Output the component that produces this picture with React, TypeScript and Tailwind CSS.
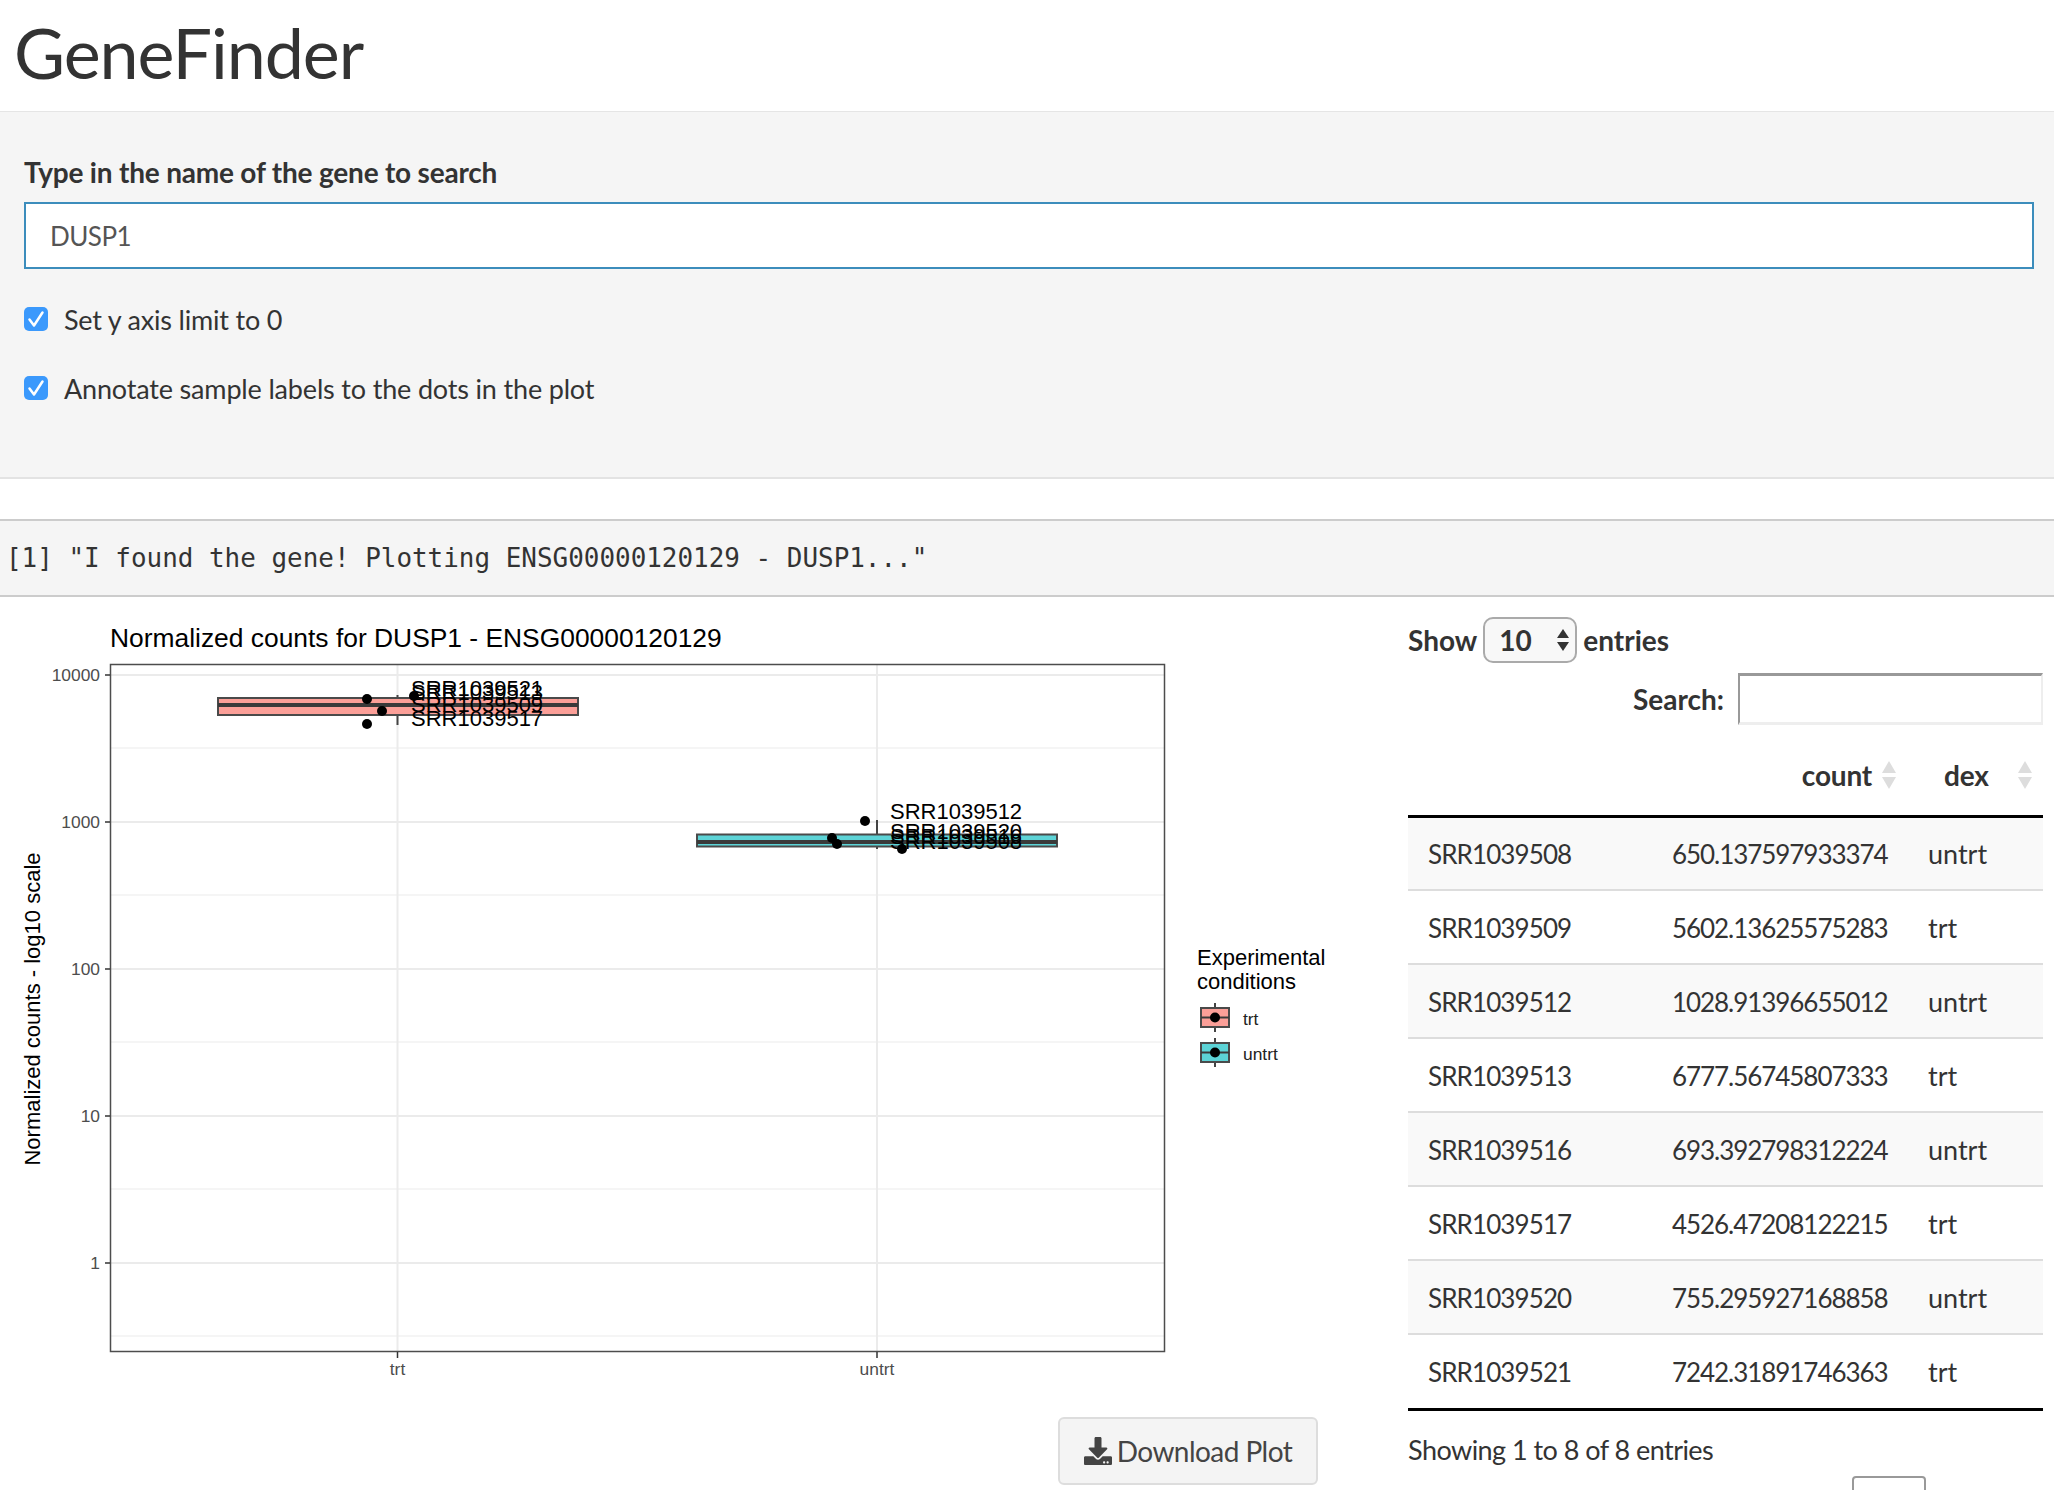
import { FaDownload } from "react-icons/fa";

const sans = "font-['Lato','Noto_Sans',sans-serif]";

const rows = [
  ["SRR1039508", "650.137597933374", "untrt"],
  ["SRR1039509", "5602.13625575283", "trt"],
  ["SRR1039512", "1028.91396655012", "untrt"],
  ["SRR1039513", "6777.56745807333", "trt"],
  ["SRR1039516", "693.392798312224", "untrt"],
  ["SRR1039517", "4526.47208122215", "trt"],
  ["SRR1039520", "755.295927168858", "untrt"],
  ["SRR1039521", "7242.31891746363", "trt"],
];

const majors = [
  { y: 675, label: "10000" },
  { y: 822, label: "1000" },
  { y: 969, label: "100" },
  { y: 1116, label: "10" },
  { y: 1263, label: "1" },
];
const minors = [748, 895, 1042, 1189, 1336];

const points = [
  { x: 414, y: 696, labelX: 411, labelY: 696, name: "SRR1039521" },
  { x: 367, y: 699, labelX: 411, labelY: 700, name: "SRR1039513" },
  { x: 382, y: 711, labelX: 411, labelY: 712, name: "SRR1039509" },
  { x: 367, y: 724, labelX: 411, labelY: 726, name: "SRR1039517" },
  { x: 865, y: 821, labelX: 890, labelY: 819, name: "SRR1039512" },
  { x: 832, y: 838, labelX: 890, labelY: 839, name: "SRR1039520" },
  { x: 837, y: 844, labelX: 890, labelY: 844, name: "SRR1039516" },
  { x: 902, y: 849, labelX: 890, labelY: 849, name: "SRR1039508" },
];

function CheckBox() {
  return (
    <span className="mb-[2px] flex h-6 w-6 items-center justify-center rounded-[5px] bg-[#3b99fc]">
      <svg width="24" height="24" viewBox="0 0 24 24" fill="none">
        <path
          d="M5.5 12.5 L10 18.5 L18.5 5.5"
          stroke="white"
          strokeWidth="2.5"
          strokeLinecap="round"
          strokeLinejoin="round"
        />
      </svg>
    </span>
  );
}

function SortArrows() {
  return (
    <svg width="16" height="30" viewBox="0 0 16 30" fill="#ddd">
      <path d="M8 1 L15 13 L1 13 Z" />
      <path d="M1 17 L15 17 L8 29 Z" />
    </svg>
  );
}

function Plot() {
  return (
    <svg
      width="1380"
      height="790"
      viewBox="0 597 1380 790"
      fontFamily="'Liberation Sans', Arial, sans-serif"
      className="block"
    >
      <text x="110" y="647" fontSize="26.4" fill="#000">
        Normalized counts for DUSP1 - ENSG00000120129
      </text>

      {minors.map((y) => (
        <line key={y} x1="110" x2="1165" y1={y} y2={y} stroke="#f2f2f2" strokeWidth="1.5" />
      ))}
      {majors.map((m) => (
        <line key={m.y} x1="110" x2="1165" y1={m.y} y2={m.y} stroke="#ebebeb" strokeWidth="2" />
      ))}
      <line x1="397.5" x2="397.5" y1="664" y2="1352" stroke="#ebebeb" strokeWidth="2" />
      <line x1="877" x2="877" y1="664" y2="1352" stroke="#ebebeb" strokeWidth="2" />

      <line x1="397.5" x2="397.5" y1="695" y2="725" stroke="#444" strokeWidth="2" />
      <rect x="218" y="698" width="360" height="17" fill="#fb9f98" stroke="#4a4a4a" strokeWidth="2" />
      <line x1="218" x2="578" y1="705" y2="705" stroke="#3a3a3a" strokeWidth="4" />

      <line x1="877" x2="877" y1="820" y2="849" stroke="#444" strokeWidth="2" />
      <rect x="697" y="834.5" width="360" height="12" fill="#5cd3d6" stroke="#4a4a4a" strokeWidth="2" />
      <line x1="697" x2="1057" y1="842" y2="842" stroke="#3a3a3a" strokeWidth="4" />

      {points.map((p) => (
        <circle key={p.name} cx={p.x} cy={p.y} r="5" fill="#000" />
      ))}
      {points.map((p) => (
        <text key={p.name} x={p.labelX} y={p.labelY} fontSize="22" fill="#000">
          {p.name}
        </text>
      ))}

      <rect x="110.5" y="664.5" width="1054" height="687" fill="none" stroke="#4d4d4d" strokeWidth="1.5" />

      {majors.map((m) => (
        <g key={m.label}>
          <line x1="105" x2="110" y1={m.y} y2={m.y} stroke="#333" strokeWidth="1.5" />
          <text x="100" y={m.y + 6} textAnchor="end" fontSize="17.4" fill="#4d4d4d">
            {m.label}
          </text>
        </g>
      ))}
      <line x1="397.5" x2="397.5" y1="1352" y2="1358" stroke="#333" strokeWidth="1.5" />
      <line x1="877" x2="877" y1="1352" y2="1358" stroke="#333" strokeWidth="1.5" />
      <text x="397.5" y="1375" textAnchor="middle" fontSize="17.4" fill="#4d4d4d">
        trt
      </text>
      <text x="877" y="1375" textAnchor="middle" fontSize="17.4" fill="#4d4d4d">
        untrt
      </text>

      <text
        x="40"
        y="1009"
        textAnchor="middle"
        fontSize="22"
        fill="#000"
        transform="rotate(-90 40 1009)"
      >
        Normalized counts - log10 scale
      </text>

      <text x="1197" y="965" fontSize="22" fill="#000">
        Experimental
      </text>
      <text x="1197" y="989" fontSize="22" fill="#000">
        conditions
      </text>

      <line x1="1215" x2="1215" y1="1003" y2="1032" stroke="#444" strokeWidth="2" />
      <rect x="1201" y="1008" width="28" height="19" fill="#fb9f98" stroke="#4a4a4a" strokeWidth="2" />
      <line x1="1201" x2="1229" y1="1017.5" y2="1017.5" stroke="#3a3a3a" strokeWidth="2" />
      <circle cx="1215" cy="1017.5" r="5" fill="#000" />
      <text x="1243" y="1025" fontSize="17.4" fill="#222">
        trt
      </text>

      <line x1="1215" x2="1215" y1="1038" y2="1067" stroke="#444" strokeWidth="2" />
      <rect x="1201" y="1043" width="28" height="19" fill="#5cd3d6" stroke="#4a4a4a" strokeWidth="2" />
      <line x1="1201" x2="1229" y1="1052.5" y2="1052.5" stroke="#3a3a3a" strokeWidth="2" />
      <circle cx="1215" cy="1052.5" r="5" fill="#000" />
      <text x="1243" y="1060" fontSize="17.4" fill="#222">
        untrt
      </text>
    </svg>
  );
}

export default function App() {
  return (
    <div className={`h-[1490px] w-full overflow-hidden bg-white text-[#333] ${sans}`}>
      <header className="flex h-[112px] items-center border-b border-[#e5e5e5] pb-[8px] pl-[14px] shadow-[0_1px_3px_rgba(0,0,0,0.08)]">
        <h1 className="text-[70px] font-normal leading-none tracking-[-0.015em]">GeneFinder</h1>
      </header>

      <section className="h-[367px] border-b-2 border-[#e3e3e3] bg-[#f5f5f5] pl-6 pr-5 pt-[43px]">
        <label className="block text-[28px] font-bold leading-[34px] tracking-[-0.2px]">
          Type in the name of the gene to search
        </label>
        <div className="mt-[13px] flex h-[67px] items-center border-2 border-[#3c8dbc] bg-white pl-6 pt-[2px] text-[26px] tracking-[-0.02em] text-[#555]">
          DUSP1
        </div>
        <div className="mt-[34px] flex items-center gap-4 text-[27px] leading-[34px] tracking-[-0.2px]">
          <CheckBox />
          <span>Set y axis limit to 0</span>
        </div>
        <div className="mt-[35px] flex items-center gap-4 text-[27px] leading-[34px] tracking-[-0.17px]">
          <CheckBox />
          <span>Annotate sample labels to the dots in the plot</span>
        </div>
      </section>

      <pre className="mt-[40px] flex h-[78px] items-center border-y-2 border-[#ccc] bg-[#f5f5f5] pl-[6px] font-['DejaVu_Sans_Mono',monospace] text-[25.95px] text-[#333]">
        [1] "I found the gene! Plotting ENSG00000120129 - DUSP1..."
      </pre>

      <main className="flex">
        <div className="w-[1408px] shrink-0">
          <Plot />
          <div className="flex justify-end pr-[90px] pt-[30px]">
            <button className="flex h-[68px] w-[260px] items-center justify-center gap-[5px] rounded-[6px] border-2 border-[#ddd] bg-[#f4f4f4] text-[28px] tracking-[-0.55px] text-[#444]">
              <FaDownload className="text-[28px]" />
              Download Plot
            </button>
          </div>
        </div>

        <div className="w-[635px] shrink-0 pt-[20px]">
          <div className="flex h-[46px] items-center text-[28px] font-bold">
            <span>Show</span>
            <span className="mx-[6px] flex h-[46px] w-[94px] items-center justify-between rounded-[10px] border-2 border-[#aaa] bg-[#f8f8f8] pl-[14px] pr-[5px]">
              10
              <svg width="14" height="24" viewBox="0 0 14 24" fill="#333">
                <path d="M7 1 L13 10 L1 10 Z" />
                <path d="M1 14 L13 14 L7 23 Z" />
              </svg>
            </span>
            <span>entries</span>
          </div>

          <div className="mt-[10px] flex items-center justify-end gap-[14px] text-[28px] font-bold">
            <span>Search:</span>
            <span className="h-[52px] w-[305px] border-x-2 border-y-[3px] border-b-[#eee] border-l-[#999] border-r-[#eee] border-t-[#999] bg-white" />
          </div>

          <table className="mt-[26px] w-full table-fixed border-collapse">
            <colgroup>
              <col className="w-[264px]" />
              <col className="w-[256px]" />
              <col />
            </colgroup>
            <thead>
              <tr className="h-[65px] border-b-[3px] border-black text-[28px] font-bold tracking-[-0.2px]">
                <th />
                <th className="pb-[16px] pr-[31px]">
                  <span className="flex items-center justify-end gap-[9px]">
                    count
                    <SortArrows />
                  </span>
                </th>
                <th className="pb-[16px] pl-4 pr-[10px]">
                  <span className="flex items-center justify-between">
                    dex
                    <SortArrows />
                  </span>
                </th>
              </tr>
            </thead>
            <tbody>
              {rows.map((row, i) => (
                <tr
                  key={row[0]}
                  className={`h-[74px] border-t-2 border-[#ddd] first:border-t-0 ${
                    i % 2 === 0 ? "bg-[#f9f9f9]" : "bg-white"
                  }`}
                >
                  <td className="pl-5 pt-[2px] text-[26px] tracking-[-0.9px]">{row[0]}</td>
                  <td className="pt-[2px] text-[26px] tracking-[-1.05px]">{row[1]}</td>
                  <td className="pt-[2px] text-[27px]">{row[2]}</td>
                </tr>
              ))}
            </tbody>
          </table>
          <div className="border-t-[3px] border-black pt-[19px] text-[27px] tracking-[-0.02em]">
            Showing 1 to 8 of 8 entries
          </div>
          <div className="ml-[444px] mt-[5px] h-20 w-[74px] rounded-[4px] border-2 border-[#999] bg-white" />
        </div>
      </main>
    </div>
  );
}
